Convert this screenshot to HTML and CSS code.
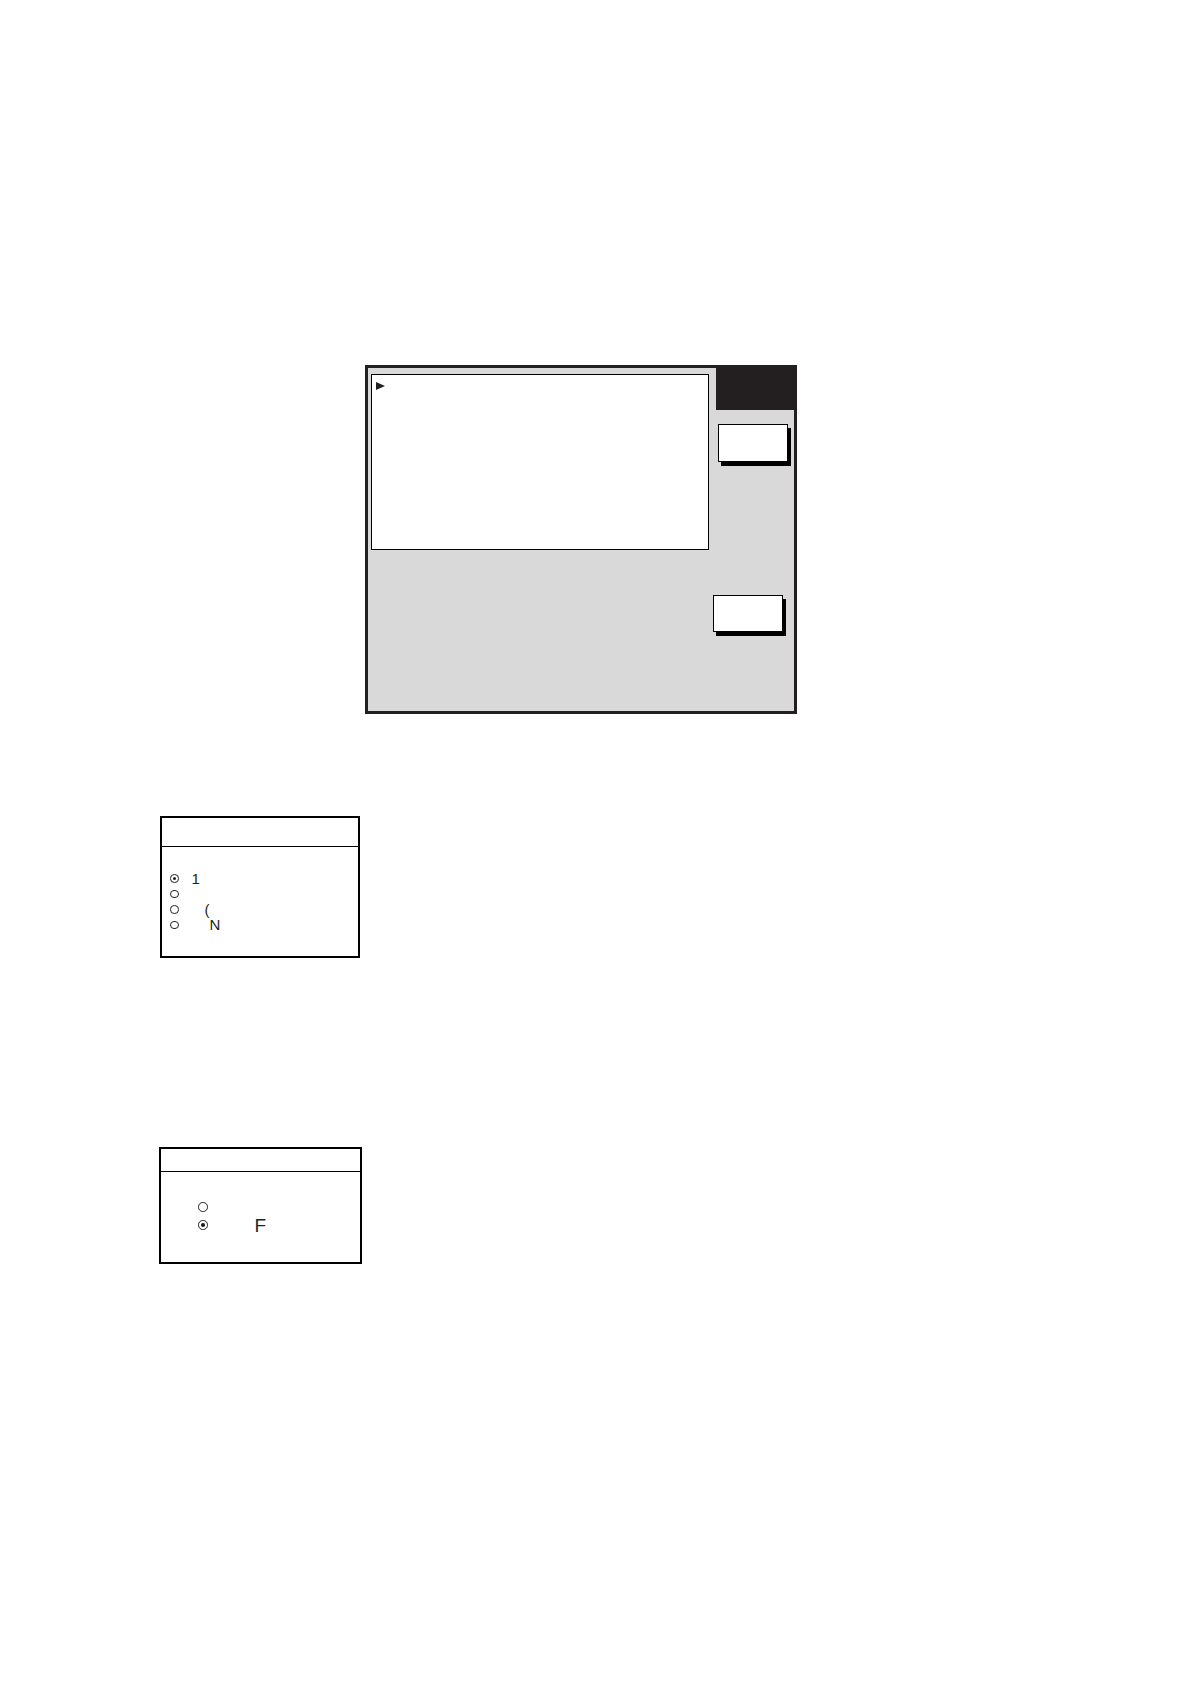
FILE: index.html
```html
<!DOCTYPE html>
<html>
<head>
<meta charset="utf-8">
<link rel="stylesheet" href="styles.css">
</head>
<body>
<div class="page">
  <div class="frame">
    <div class="left-col">
      <div class="list-box">
        <span class="pointer"></span>
      </div>
    </div>
    <div class="right-col">
      <div class="title-block"></div>
      <div class="btn btn-one"></div>
      <div class="btn btn-two"></div>
    </div>
  </div>

  <div class="opt-box opt-a">
    <div class="opt-head"></div>
    <div class="opt-body">
      <div class="row"><span class="radio on"></span><span class="label l1">1</span></div>
      <div class="row"><span class="radio"></span></div>
      <div class="row"><span class="radio"></span><span class="label l3">(</span></div>
      <div class="row"><span class="radio"></span><span class="label l4">N</span></div>
    </div>
  </div>

  <div class="opt-box opt-b">
    <div class="opt-head"></div>
    <div class="opt-body">
      <div class="row"><span class="radio"></span></div>
      <div class="row"><span class="radio on"></span><span class="label lf">F</span></div>
    </div>
  </div>
</div>
</body>
</html>
```

FILE: styles.css
```css
html, body {
  margin: 0;
  padding: 0;
  background: #fff;
}

body {
  font-family: "Liberation Sans", Arial, sans-serif;
  color: #231f20;
}

.page {
  width: 1190px;
  min-height: 1684px;
  padding-top: 365px;
  box-sizing: border-box;
}

/* main dialog */
.frame {
  margin-left: 365px;
  width: 432px;
  height: 349px;
  box-sizing: border-box;
  border: 3px solid #231f20;
  background: #d9d9d9;
  display: flex;
}

.left-col {
  width: 341px;
  padding: 6px 0 0 3px;
  box-sizing: border-box;
}

.list-box {
  width: 338px;
  height: 176px;
  box-sizing: border-box;
  border: 1.5px solid #000;
  background: #fff;
  padding: 7px 0 0 4px;
}

.pointer {
  display: block;
  width: 0;
  height: 0;
  border-top: 4.5px solid transparent;
  border-bottom: 4.5px solid transparent;
  border-left: 9px solid #231f20;
}

.right-col {
  width: 85px;
  display: flex;
  flex-direction: column;
  align-items: flex-start;
}

.title-block {
  margin-left: 7px;
  margin-top: -3px;
  width: 81px;
  height: 45px;
  background: #231f20;
}

.btn {
  width: 70px;
  box-sizing: border-box;
  border: 1.5px solid #000;
  background: #fff;
  box-shadow: 3px 4px 0 #000;
}

.btn-one {
  margin-left: 9px;
  margin-top: 14px;
  height: 38px;
}

.btn-two {
  margin-left: 4px;
  margin-top: 133px;
  height: 37px;
}

/* option boxes */
.opt-box {
  box-sizing: border-box;
  border: 2px solid #000;
  background: #fff;
}

.opt-head {
  border-bottom: 1.3px solid #000;
}

.row {
  display: flex;
  align-items: center;
}

.radio {
  flex: none;
  box-sizing: border-box;
  border-radius: 50%;
  border: 1px solid #231f20;
  display: flex;
  align-items: center;
  justify-content: center;
}

.radio.on::after {
  content: "";
  display: block;
  width: 3px;
  height: 3px;
  border-radius: 50%;
  background: #231f20;
}

.label {
  line-height: 1;
}

/* box A */
.opt-a {
  margin-top: 102px;
  margin-left: 160px;
  width: 200px;
  height: 142px;
}

.opt-a .opt-head {
  height: 28px;
}

.opt-a .opt-body {
  padding: 24px 0 0 8px;
}

.opt-a .row {
  height: 15.4px;
  font-size: 15px;
}

.opt-a .radio {
  width: 8.5px;
  height: 8.5px;
}

.opt-a .l1 { margin-left: 13px; }
.opt-a .l3 { margin-left: 26px; }
.opt-a .l4 { margin-left: 31px; }

/* box B */
.opt-b {
  margin-top: 189px;
  margin-left: 159px;
  width: 203px;
  height: 117px;
}

.opt-b .opt-head {
  height: 22px;
}

.opt-b .opt-body {
  padding: 26px 0 0 37px;
}

.opt-b .row {
  height: 18px;
  font-size: 19px;
}

.opt-b .radio {
  width: 9.5px;
  height: 9.5px;
}

.opt-b .radio.on::after {
  width: 3.5px;
  height: 3.5px;
}

.opt-b .lf { margin-left: 47px; }
```
